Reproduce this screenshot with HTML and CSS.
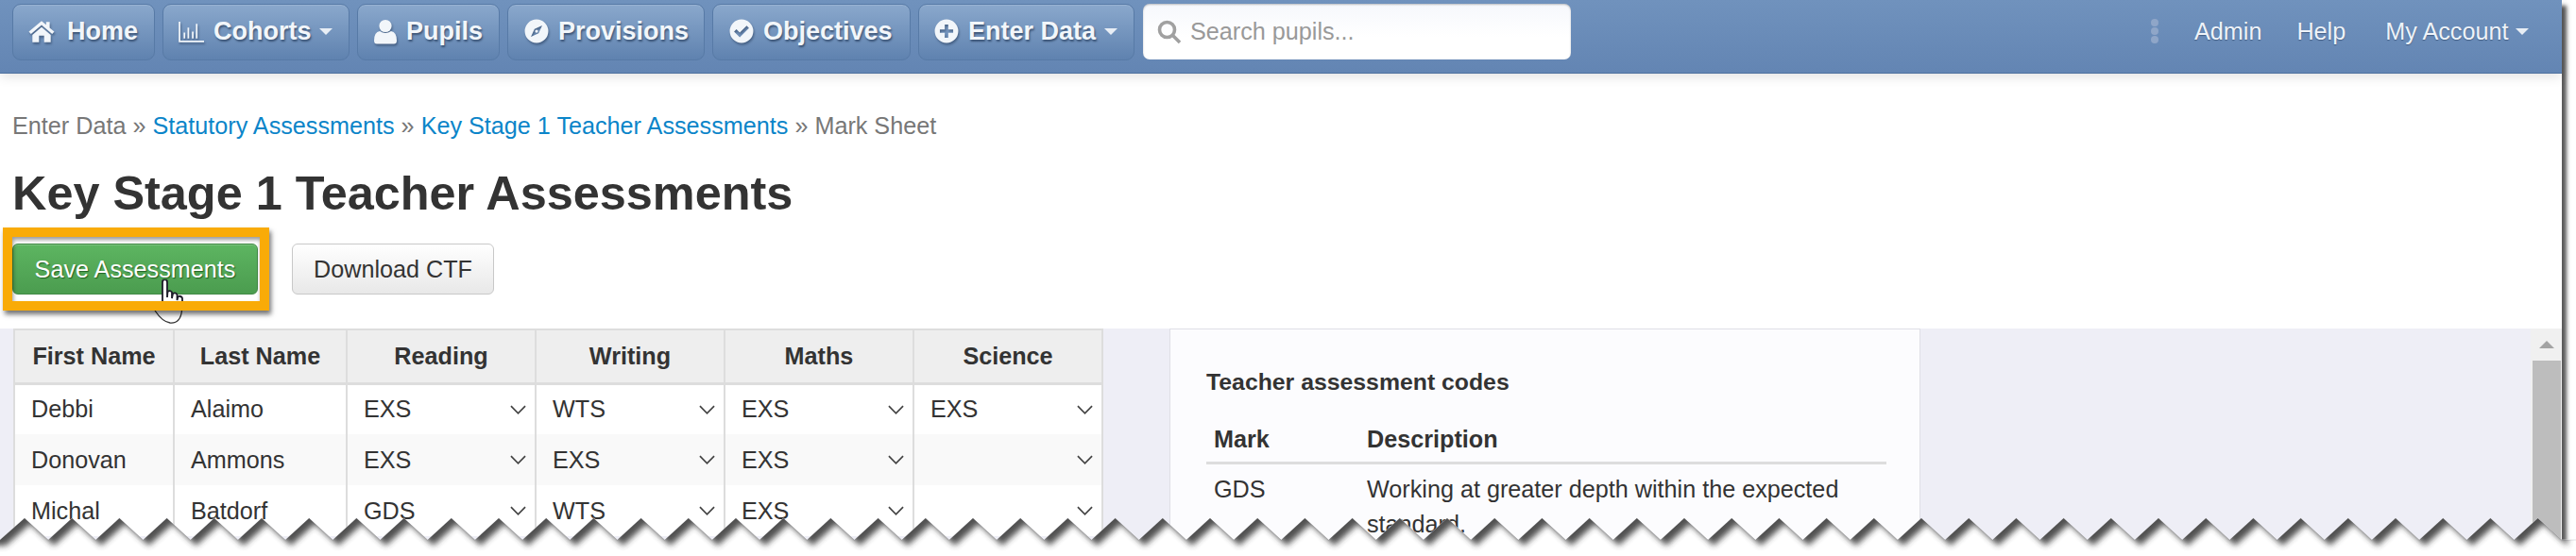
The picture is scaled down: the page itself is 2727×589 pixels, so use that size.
FILE: index.html
```html
<!DOCTYPE html>
<html lang="en">
<head>
<meta charset="utf-8">
<title>Key Stage 1 Teacher Assessments</title>
<link rel="stylesheet" href="styles.css">
</head>
<body>
<div class="page">
  <nav class="nav">
    <a class="nav-btn btn-home"><svg class="ico" viewBox="0 0 26 24"><path d="M13 2 L0.5 12.5 L2.6 14.8 L13 6 L23.4 14.8 L25.5 12.5 L21 8.7 V3 H17.5 V5.8 Z"/><path d="M13 8 L4 15.6 V23 H10.5 V16.5 H15.5 V23 H22 V15.6 Z"/></svg>Home</a>
    <a class="nav-btn btn-cohorts"><svg class="ico" viewBox="0 0 26 24"><path class="bars" d="M1 2 V22 H26 M6 19 V13 M10 19 V8 M14.5 19 V12 M18.5 19 V4"/></svg>Cohorts<i class="caret"></i></a>
    <a class="nav-btn btn-pupils"><svg class="ico ico-user" viewBox="0 0 24 26"><circle cx="12" cy="7" r="6.6"/><path d="M3 26 Q0 26 0 22.5 Q0 13.5 6 12.5 Q12 16.5 18 12.5 Q24 13.5 24 22.5 Q24 26 21 26 Z"/></svg>Pupils</a>
    <a class="nav-btn btn-prov"><svg class="ico" viewBox="0 0 24 24"><path fill-rule="evenodd" d="M12 0.5a11.5 11.5 0 1 0 0 23 11.5 11.5 0 0 0 0-23z M17.5 6.5 L14 14 L6.5 17.5 L10 10 Z M12 10.5a1.5 1.5 0 1 0 0 3 1.5 1.5 0 0 0 0-3z"/></svg>Provisions</a>
    <a class="nav-btn btn-obj"><svg class="ico" viewBox="0 0 24 24"><path fill-rule="evenodd" d="M12 0.5a11.5 11.5 0 1 0 0 23 11.5 11.5 0 0 0 0-23z M10.3 18 L4.7 12.4 L7 10.1 L10.3 13.4 L17 6.7 L19.3 9 Z"/></svg>Objectives</a>
    <a class="nav-btn btn-enter"><svg class="ico" viewBox="0 0 24 24"><path fill-rule="evenodd" d="M12 0.5a11.5 11.5 0 1 0 0 23 11.5 11.5 0 0 0 0-23z M10.3 5.5 H13.7 V10.3 H18.5 V13.7 H13.7 V18.5 H10.3 V13.7 H5.5 V10.3 H10.3 Z"/></svg>Enter Data<i class="caret"></i></a>
    <label class="search">
      <svg class="search-ico" viewBox="0 0 26 26"><circle cx="10.5" cy="10.5" r="8"/><path d="M16.5 16.5 L24 24"/></svg>
      <input class="search-input" type="text" placeholder="Search pupils...">
    </label>
    <span class="kebab"><i></i><i></i><i></i></span>
    <a class="nav-link link-admin">Admin</a>
    <a class="nav-link link-help">Help</a>
    <a class="nav-link link-acct">My Account<i class="caret"></i></a>
  </nav>

  <p class="crumbs">Enter Data » <a>Statutory Assessments</a> » <a>Key Stage 1 Teacher Assessments</a> » Mark Sheet</p>
  <h1 class="title">Key Stage 1 Teacher Assessments</h1>

  <div class="actions">
    <button class="btn btn-save">Save Assessments</button>
    <button class="btn btn-plain">Download CTF</button>
  </div>

  <main class="work">
    <table class="marks">
      <colgroup><col class="c1"><col class="c2"><col class="c3"><col class="c3"><col class="c3"><col class="c3"></colgroup>
      <thead>
        <tr><th>First Name</th><th>Last Name</th><th>Reading</th><th>Writing</th><th>Maths</th><th>Science</th></tr>
      </thead>
      <tbody>
        <tr><td>Debbi</td><td>Alaimo</td>
          <td class="pick"><div class="sel">EXS<svg viewBox="0 0 18 10"><path d="M1 1 L9 9 L17 1"/></svg></div></td>
          <td class="pick"><div class="sel">WTS<svg viewBox="0 0 18 10"><path d="M1 1 L9 9 L17 1"/></svg></div></td>
          <td class="pick"><div class="sel">EXS<svg viewBox="0 0 18 10"><path d="M1 1 L9 9 L17 1"/></svg></div></td>
          <td class="pick"><div class="sel">EXS<svg viewBox="0 0 18 10"><path d="M1 1 L9 9 L17 1"/></svg></div></td></tr>
        <tr><td>Donovan</td><td>Ammons</td>
          <td class="pick"><div class="sel">EXS<svg viewBox="0 0 18 10"><path d="M1 1 L9 9 L17 1"/></svg></div></td>
          <td class="pick"><div class="sel">EXS<svg viewBox="0 0 18 10"><path d="M1 1 L9 9 L17 1"/></svg></div></td>
          <td class="pick"><div class="sel">EXS<svg viewBox="0 0 18 10"><path d="M1 1 L9 9 L17 1"/></svg></div></td>
          <td class="pick"><div class="sel"><svg viewBox="0 0 18 10"><path d="M1 1 L9 9 L17 1"/></svg></div></td></tr>
        <tr><td>Michal</td><td>Batdorf</td>
          <td class="pick"><div class="sel">GDS<svg viewBox="0 0 18 10"><path d="M1 1 L9 9 L17 1"/></svg></div></td>
          <td class="pick"><div class="sel">WTS<svg viewBox="0 0 18 10"><path d="M1 1 L9 9 L17 1"/></svg></div></td>
          <td class="pick"><div class="sel">EXS<svg viewBox="0 0 18 10"><path d="M1 1 L9 9 L17 1"/></svg></div></td>
          <td class="pick"><div class="sel"><svg viewBox="0 0 18 10"><path d="M1 1 L9 9 L17 1"/></svg></div></td></tr>
      </tbody>
    </table>

    <aside class="panel">
      <h2 class="panel-title">Teacher assessment codes</h2>
      <table class="codes">
        <thead><tr><th class="mark">Mark</th><th>Description</th></tr></thead>
        <tbody><tr><td>GDS</td><td>Working at greater depth within the expected standard.</td></tr></tbody>
      </table>
    </aside>

    <div class="scrollbar"><div class="scroll-up"><i></i></div><div class="scroll-thumb"></div></div>
  </main>

  <svg class="hand" viewBox="0 0 40 56">
    <path d="M12 3 Q12 0 14.5 0 Q17 0 17 3 V19 L17.5 13 Q20 11 22 13.5 V20 L23 15 Q26 13.5 27.5 16 V22 L28.5 18 Q32 17 33 20 V30 H12 Z"/>
  </svg>
  <svg class="hand-tail" viewBox="0 0 34 16"><path d="M2 1 Q10 13 18 14 Q29 15 30.5 1"/></svg>
  <div class="callout"></div>
</div>

<svg class="torn" viewBox="0 0 2727 49">
  <defs>
    <path id="edge" d="M0 32 L26 9 l
      25.1 23 25.1-23 25.1 23 25.1-23 25.1 23 25.1-23 25.1 23 25.1-23 25.1 23 25.1-23 25.1 23 25.1-23 25.1 23 25.1-23 25.1 23 25.1-23 25.1 23 25.1-23 25.1 23 25.1-23
      25.1 23 25.1-23 25.1 23 25.1-23 25.1 23 25.1-23 25.1 23 25.1-23 25.1 23 25.1-23 25.1 23 25.1-23 25.1 23 25.1-23 25.1 23 25.1-23 25.1 23 25.1-23 25.1 23 25.1-23
      25.1 23 25.1-23 25.1 23 25.1-23 25.1 23 25.1-23 25.1 23 25.1-23 25.1 23 25.1-23 25.1 23 25.1-23 25.1 23 25.1-23 25.1 23 25.1-23 25.1 23 25.1-23 25.1 23 25.1-23
      25.1 23 25.1-23 25.1 23 25.1-23 25.1 23 25.1-23 25.1 23 25.1-23 25.1 23 25.1-23 25.1 23 25.1-23 25.1 23 25.1-23 25.1 23 25.1-23 25.1 23 25.1-23 25.1 23 25.1-23
      25.1 23 25.1-23 25.1 23 25.1-23 25.1 23 25.1-23 25.1 23 25.1-23 25.1 23 25.1-23 25.1 23 25.1-23 25.1 23 25.1-23 25.1 23 25.1-23 25.1 23 25.1-23 25.1 23 25.1-23
      25.1 23 25.1-23 25.1 23 25.1-23 25.1 23 25.1-23
      L2712 32 L2740 32 V70 H-10 V32 Z"/>
    <clipPath id="below"><use href="#edge"/></clipPath>
    <filter id="soft" x="-20" y="-80" width="2800" height="200" filterUnits="userSpaceOnUse"><feGaussianBlur stdDeviation="3"/></filter>
  </defs>
  <use href="#edge" class="torn-fill"/>
  <g clip-path="url(#below)">
    <path class="torn-shadow" filter="url(#soft)" transform="translate(6 6)" d="M0 32 L26 9 l
      25.1 23 25.1-23 25.1 23 25.1-23 25.1 23 25.1-23 25.1 23 25.1-23 25.1 23 25.1-23 25.1 23 25.1-23 25.1 23 25.1-23 25.1 23 25.1-23 25.1 23 25.1-23 25.1 23 25.1-23
      25.1 23 25.1-23 25.1 23 25.1-23 25.1 23 25.1-23 25.1 23 25.1-23 25.1 23 25.1-23 25.1 23 25.1-23 25.1 23 25.1-23 25.1 23 25.1-23 25.1 23 25.1-23 25.1 23 25.1-23
      25.1 23 25.1-23 25.1 23 25.1-23 25.1 23 25.1-23 25.1 23 25.1-23 25.1 23 25.1-23 25.1 23 25.1-23 25.1 23 25.1-23 25.1 23 25.1-23 25.1 23 25.1-23 25.1 23 25.1-23
      25.1 23 25.1-23 25.1 23 25.1-23 25.1 23 25.1-23 25.1 23 25.1-23 25.1 23 25.1-23 25.1 23 25.1-23 25.1 23 25.1-23 25.1 23 25.1-23 25.1 23 25.1-23 25.1 23 25.1-23
      25.1 23 25.1-23 25.1 23 25.1-23 25.1 23 25.1-23 25.1 23 25.1-23 25.1 23 25.1-23 25.1 23 25.1-23 25.1 23 25.1-23 25.1 23 25.1-23 25.1 23 25.1-23 25.1 23 25.1-23
      25.1 23 25.1-23 25.1 23 25.1-23 25.1 23 25.1-23
      L2712 32 V-60 H-30 V32 Z"/>
  </g>
</svg>
</body>
</html>
```
FILE: styles.css
```css
* { box-sizing: border-box; }
html, body { margin: 0; padding: 0; height: 589px; overflow: hidden; background: #fff; }
body { font-family: "Liberation Sans", Arial, sans-serif; font-size: 25.2px; color: #333; position: relative; }

.page { position: relative; width: 2712px; height: 589px; background: #fff; box-shadow: 5px 6px 4px rgba(0,0,0,.65); overflow: visible; }

.nav { display: flex; align-items: flex-start; height: 78px; padding: 4px 0 0 13px; gap: 8px;
  background: linear-gradient(#7092bd, #6385b3); border-bottom: 1px solid #4f72a0;
  box-shadow: 0 3px 12px rgba(0,0,0,.12); position: relative; }
.nav-btn { display: flex; align-items: center; height: 60px; padding-bottom: 2px; color: #f2f6fa; font-weight: bold; font-size: 27px;
  border: 1px solid #577aa6; border-radius: 9px; background: linear-gradient(#8aa8cc, #5f82af);
  text-shadow: 1px 2px 2px rgba(30,50,80,.65); box-shadow: inset 0 1px 0 rgba(255,255,255,.12); white-space: nowrap; }
.ico { fill: #f2f6fa; flex: none; filter: drop-shadow(1px 2px 1px rgba(30,50,80,.5)); }
.bars { fill: none; stroke: #f2f6fa; stroke-width: 1.7; }
.caret { display: inline-block; width: 0; height: 0; border-left: 7px solid transparent; border-right: 7px solid transparent; border-top: 7px solid #e8eef5; }
.btn-home { width: 151px; padding-left: 16px; }
.btn-home .ico { width: 28px; height: 26px; margin-right: 13px; }
.btn-cohorts { width: 198px; padding-left: 16px; }
.btn-cohorts .ico { width: 27px; height: 25px; margin-right: 10px; }
.btn-cohorts .caret { margin-left: 8px; }
.btn-pupils { width: 151px; padding-left: 17px; }
.btn-pupils .ico { width: 24px; height: 27px; margin-right: 10px; }
.btn-prov { width: 209px; padding-left: 17px; }
.btn-prov .ico { width: 26px; height: 26px; margin-right: 10px; }
.btn-obj { width: 210px; padding-left: 17px; }
.btn-obj .ico { width: 26px; height: 26px; margin-right: 10px; }
.btn-enter { width: 229px; padding-left: 16px; }
.btn-enter .ico { width: 26px; height: 26px; margin-right: 10px; }
.btn-enter .caret { margin-left: 9px; }

.search { display: flex; align-items: center; width: 453px; height: 59px; margin-left: 1px; padding-left: 15px;
  background: linear-gradient(#f6f8fc, #fff 60%); border-radius: 7px; box-shadow: inset 0 1px 2px rgba(0,0,0,.25); }
.search-ico { width: 26px; height: 26px; fill: none; stroke: #a0a0a0; stroke-width: 3.6; flex: none; margin-right: 9px; }
.search-input { border: 0; outline: 0; background: transparent; font: 25.2px "Liberation Sans", Arial, sans-serif; width: 400px; padding: 0; }
.search-input::placeholder { color: #999; opacity: 1; }

.kebab { display: flex; flex-direction: column; gap: 1px; margin: 16px 0 0 606px; }
.kebab i { width: 8px; height: 8px; border-radius: 50%; background: #8fa6c8; }
.nav-link { color: #eef3f9; font-size: 25.2px; margin-top: 15px; line-height: 28px; text-shadow: 0 1px 1px rgba(30,50,80,.5); white-space: nowrap; display: flex; align-items: center; }
.link-admin { margin-left: 30px; }
.link-help { margin-left: 29px; }
.link-acct { margin-left: 34px; }
.link-acct .caret { margin-left: 8px; }

.crumbs { margin: 41px 0 0 13px; line-height: 28px; color: #777; }
.crumbs a { color: #0b85c9; }
.title { margin: 28px 0 0 13px; font-size: 50.4px; line-height: 60px; font-weight: bold; color: #333; }

.actions { display: flex; gap: 36px; margin: 23px 0 0 13px; }
.btn { height: 54px; padding: 0; font: 25.2px "Liberation Sans", Arial, sans-serif; border-radius: 6px; }
.btn-save { width: 260px; color: #fff; border: 1px solid #428a46; background: linear-gradient(#5db561, #4b9c4f);
  text-shadow: 1px 1px 1px rgba(0,50,0,.6); box-shadow: inset 0 1px 0 rgba(255,255,255,.2); }
.btn-plain { width: 214px; color: #333; border: 1px solid #c8c8c8; background: linear-gradient(#fff, #e8e8e8); }

.work { display: flex; align-items: flex-start; height: 241px; margin-top: 36px; padding-left: 14px; background: #eeeef6; }
.marks { border-collapse: collapse; table-layout: fixed; width: 1153px; background: #fff; flex: none; }
.c1 { width: 169px; } .c2 { width: 183px; } .c3 { width: 200px; }
.marks th, .marks td { border-left: 2px solid #ddd; border-right: 2px solid #ddd; }
.marks th { height: 57px; background: #eee; font-weight: bold; text-align: center; border-top: 2px solid #ddd; border-bottom: 3px solid #ddd; padding: 0 4px; }
.marks td { height: 54px; padding: 0 17px; }
.marks tbody tr:nth-child(even) td { background: #f9f9f9; }
.marks td.pick { padding: 0 9px 0 17px; }
.sel { display: flex; align-items: center; justify-content: space-between; min-height: 28px; }
.sel svg { width: 17px; height: 10px; margin-left: auto; fill: none; stroke: #444; stroke-width: 1.8; flex: none; }

.panel { width: 795px; height: 241px; margin-left: 70px; padding: 40px 36px 0 38px; background: #fcfcfe; border: 1px solid #dfdfe6; flex: none; overflow: hidden; }
.panel-title { margin: 0; font-size: 24.8px; line-height: 32px; font-weight: bold; }
.codes { border-collapse: collapse; width: 720px; margin-top: 22px; }
.codes th { text-align: left; font-weight: bold; padding: 0 8px; height: 47px; border-bottom: 3px solid #ddd; }
.codes th.mark { width: 162px; }
.codes td { padding: 8px 8px; line-height: 37px; vertical-align: top; }

.scrollbar { margin-left: auto; width: 33px; height: 241px; background: #f0f0f0; padding: 0 1px 0 2px; flex: none; overflow: hidden; }
.scroll-up { height: 34px; display: flex; align-items: center; justify-content: center; }
.scroll-up i { width: 0; height: 0; border-left: 8px solid transparent; border-right: 8px solid transparent; border-bottom: 8px solid #a3a3a3; }
.scroll-thumb { height: 207px; background: #bdbdbd; }

.hand { position: absolute; left: 160px; top: 296px; width: 40px; height: 56px; fill: #fff; stroke: #1c1c28; stroke-width: 1.8; }
.hand-tail { position: absolute; left: 162px; top: 328px; width: 34px; height: 16px; fill: none; stroke: #333; stroke-width: 1.3; }
.callout { position: absolute; left: 3px; top: 241px; width: 282px; height: 88px; border: 10px solid #f9ab07;
  box-shadow: 2px 4px 5px rgba(0,0,0,.55), inset 1px 3px 4px rgba(0,0,0,.4); }

.torn { position: absolute; left: 0; top: 540px; width: 2727px; height: 49px; }
.torn-fill { fill: #fff; stroke: #d4d4d8; stroke-width: .7; }
.torn-shadow { fill: #333; opacity: .85; }
```
